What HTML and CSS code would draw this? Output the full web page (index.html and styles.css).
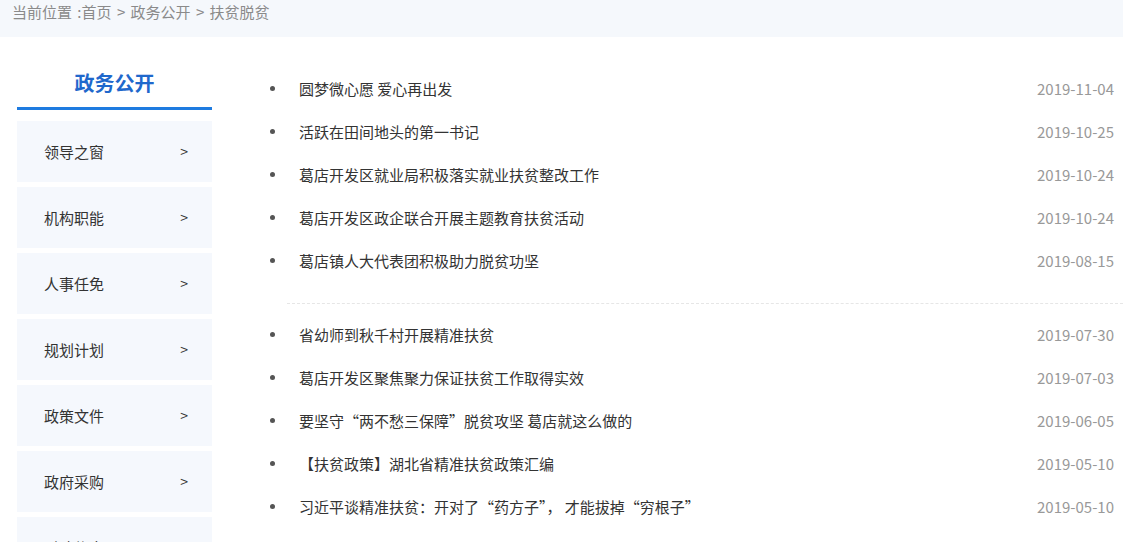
FILE: index.html
```html
<!DOCTYPE html>
<html lang="zh-CN">
<head>
<meta charset="utf-8">
<title>扶贫脱贫</title>
<link rel="stylesheet" href="styles.css">
</head>
<body>
<div class="crumb">当前位置 :首页 &gt; 政务公开 &gt; 扶贫脱贫</div>
<div class="wrap">
  <aside class="side">
    <h2 class="side-title">政务公开</h2>
    <ul class="menu">
      <li class="menu-item"><span>领导之窗</span><span class="arrow">&gt;</span></li>
      <li class="menu-item"><span>机构职能</span><span class="arrow">&gt;</span></li>
      <li class="menu-item"><span>人事任免</span><span class="arrow">&gt;</span></li>
      <li class="menu-item"><span>规划计划</span><span class="arrow">&gt;</span></li>
      <li class="menu-item"><span>政策文件</span><span class="arrow">&gt;</span></li>
      <li class="menu-item"><span>政府采购</span><span class="arrow">&gt;</span></li>
      <li class="menu-item"><span>财政信息</span><span class="arrow">&gt;</span></li>
    </ul>
  </aside>
  <main class="main">
    <ul class="group first">
      <li class="row"><span class="dot"></span><span class="title">圆梦微心愿 爱心再出发</span><span class="date">2019-11-04</span></li>
      <li class="row"><span class="dot"></span><span class="title">活跃在田间地头的第一书记</span><span class="date">2019-10-25</span></li>
      <li class="row"><span class="dot"></span><span class="title">葛店开发区就业局积极落实就业扶贫整改工作</span><span class="date">2019-10-24</span></li>
      <li class="row"><span class="dot"></span><span class="title">葛店开发区政企联合开展主题教育扶贫活动</span><span class="date">2019-10-24</span></li>
      <li class="row"><span class="dot"></span><span class="title">葛店镇人大代表团积极助力脱贫功坚</span><span class="date">2019-08-15</span></li>
    </ul>
    <div class="sep"></div>
    <ul class="group second">
      <li class="row"><span class="dot"></span><span class="title">省幼师到秋千村开展精准扶贫</span><span class="date">2019-07-30</span></li>
      <li class="row"><span class="dot"></span><span class="title">葛店开发区聚焦聚力保证扶贫工作取得实效</span><span class="date">2019-07-03</span></li>
      <li class="row"><span class="dot"></span><span class="title">要坚守“两不愁三保障”脱贫攻坚 葛店就这么做的</span><span class="date">2019-06-05</span></li>
      <li class="row"><span class="dot"></span><span class="title">【扶贫政策】湖北省精准扶贫政策汇编</span><span class="date">2019-05-10</span></li>
      <li class="row"><span class="dot"></span><span class="title">习近平谈精准扶贫：开对了“药方子”， 才能拔掉“穷根子”</span><span class="date">2019-05-10</span></li>
    </ul>
  </main>
</div>
</body>
</html>
```

FILE: styles.css
```css
* { box-sizing: border-box; }
html, body { margin: 0; padding: 0; background: #fff; }
body {
  font-family: "Microsoft YaHei", "Noto Sans CJK SC", sans-serif;
  font-size: 15px;
  color: #333;
  overflow: hidden;
}
ul { list-style: none; margin: 0; padding: 0; }

.crumb {
  height: 37px;
  background: #f5f8fc;
  color: #8a8a8a;
  padding: 0 12px;
  line-height: 23px;
  word-spacing: 2px;
}

.wrap {
  display: flex;
  padding-left: 17px;
}

.side {
  width: 195px;
  flex: none;
}
.side-title {
  margin: 0;
  padding: 26px 0 4px;
  line-height: 40px;
  font-size: 20px;
  font-weight: bold;
  color: #1f68cc;
  text-align: center;
  border-bottom: 3px solid #1e7be0;
}
.menu { margin-top: 11px; }
.menu-item {
  height: 61px;
  margin-bottom: 5px;
  background: #f5f8fd;
  display: flex;
  align-items: center;
  justify-content: space-between;
  padding: 0 24px 1px 27px;
  color: #333;
}
.arrow { font-size: 14px; }

.main {
  flex: 1;
  margin-left: 50px;
}
.group.first { margin-top: 30px; padding-bottom: 21px; }
.group.second { padding-top: 9px; }
.row {
  height: 43px;
  display: flex;
  align-items: center;
  padding: 0 9px 0 8px;
}
.dot {
  width: 5px;
  height: 5px;
  border-radius: 50%;
  background: #555;
  flex: none;
  margin-right: 24px;
}
.title { flex: 1; color: #333; }
.date { color: #999; }
.sep {
  margin-left: 25px;
  border-top: 1px dashed #e6e6e6;
}
```
